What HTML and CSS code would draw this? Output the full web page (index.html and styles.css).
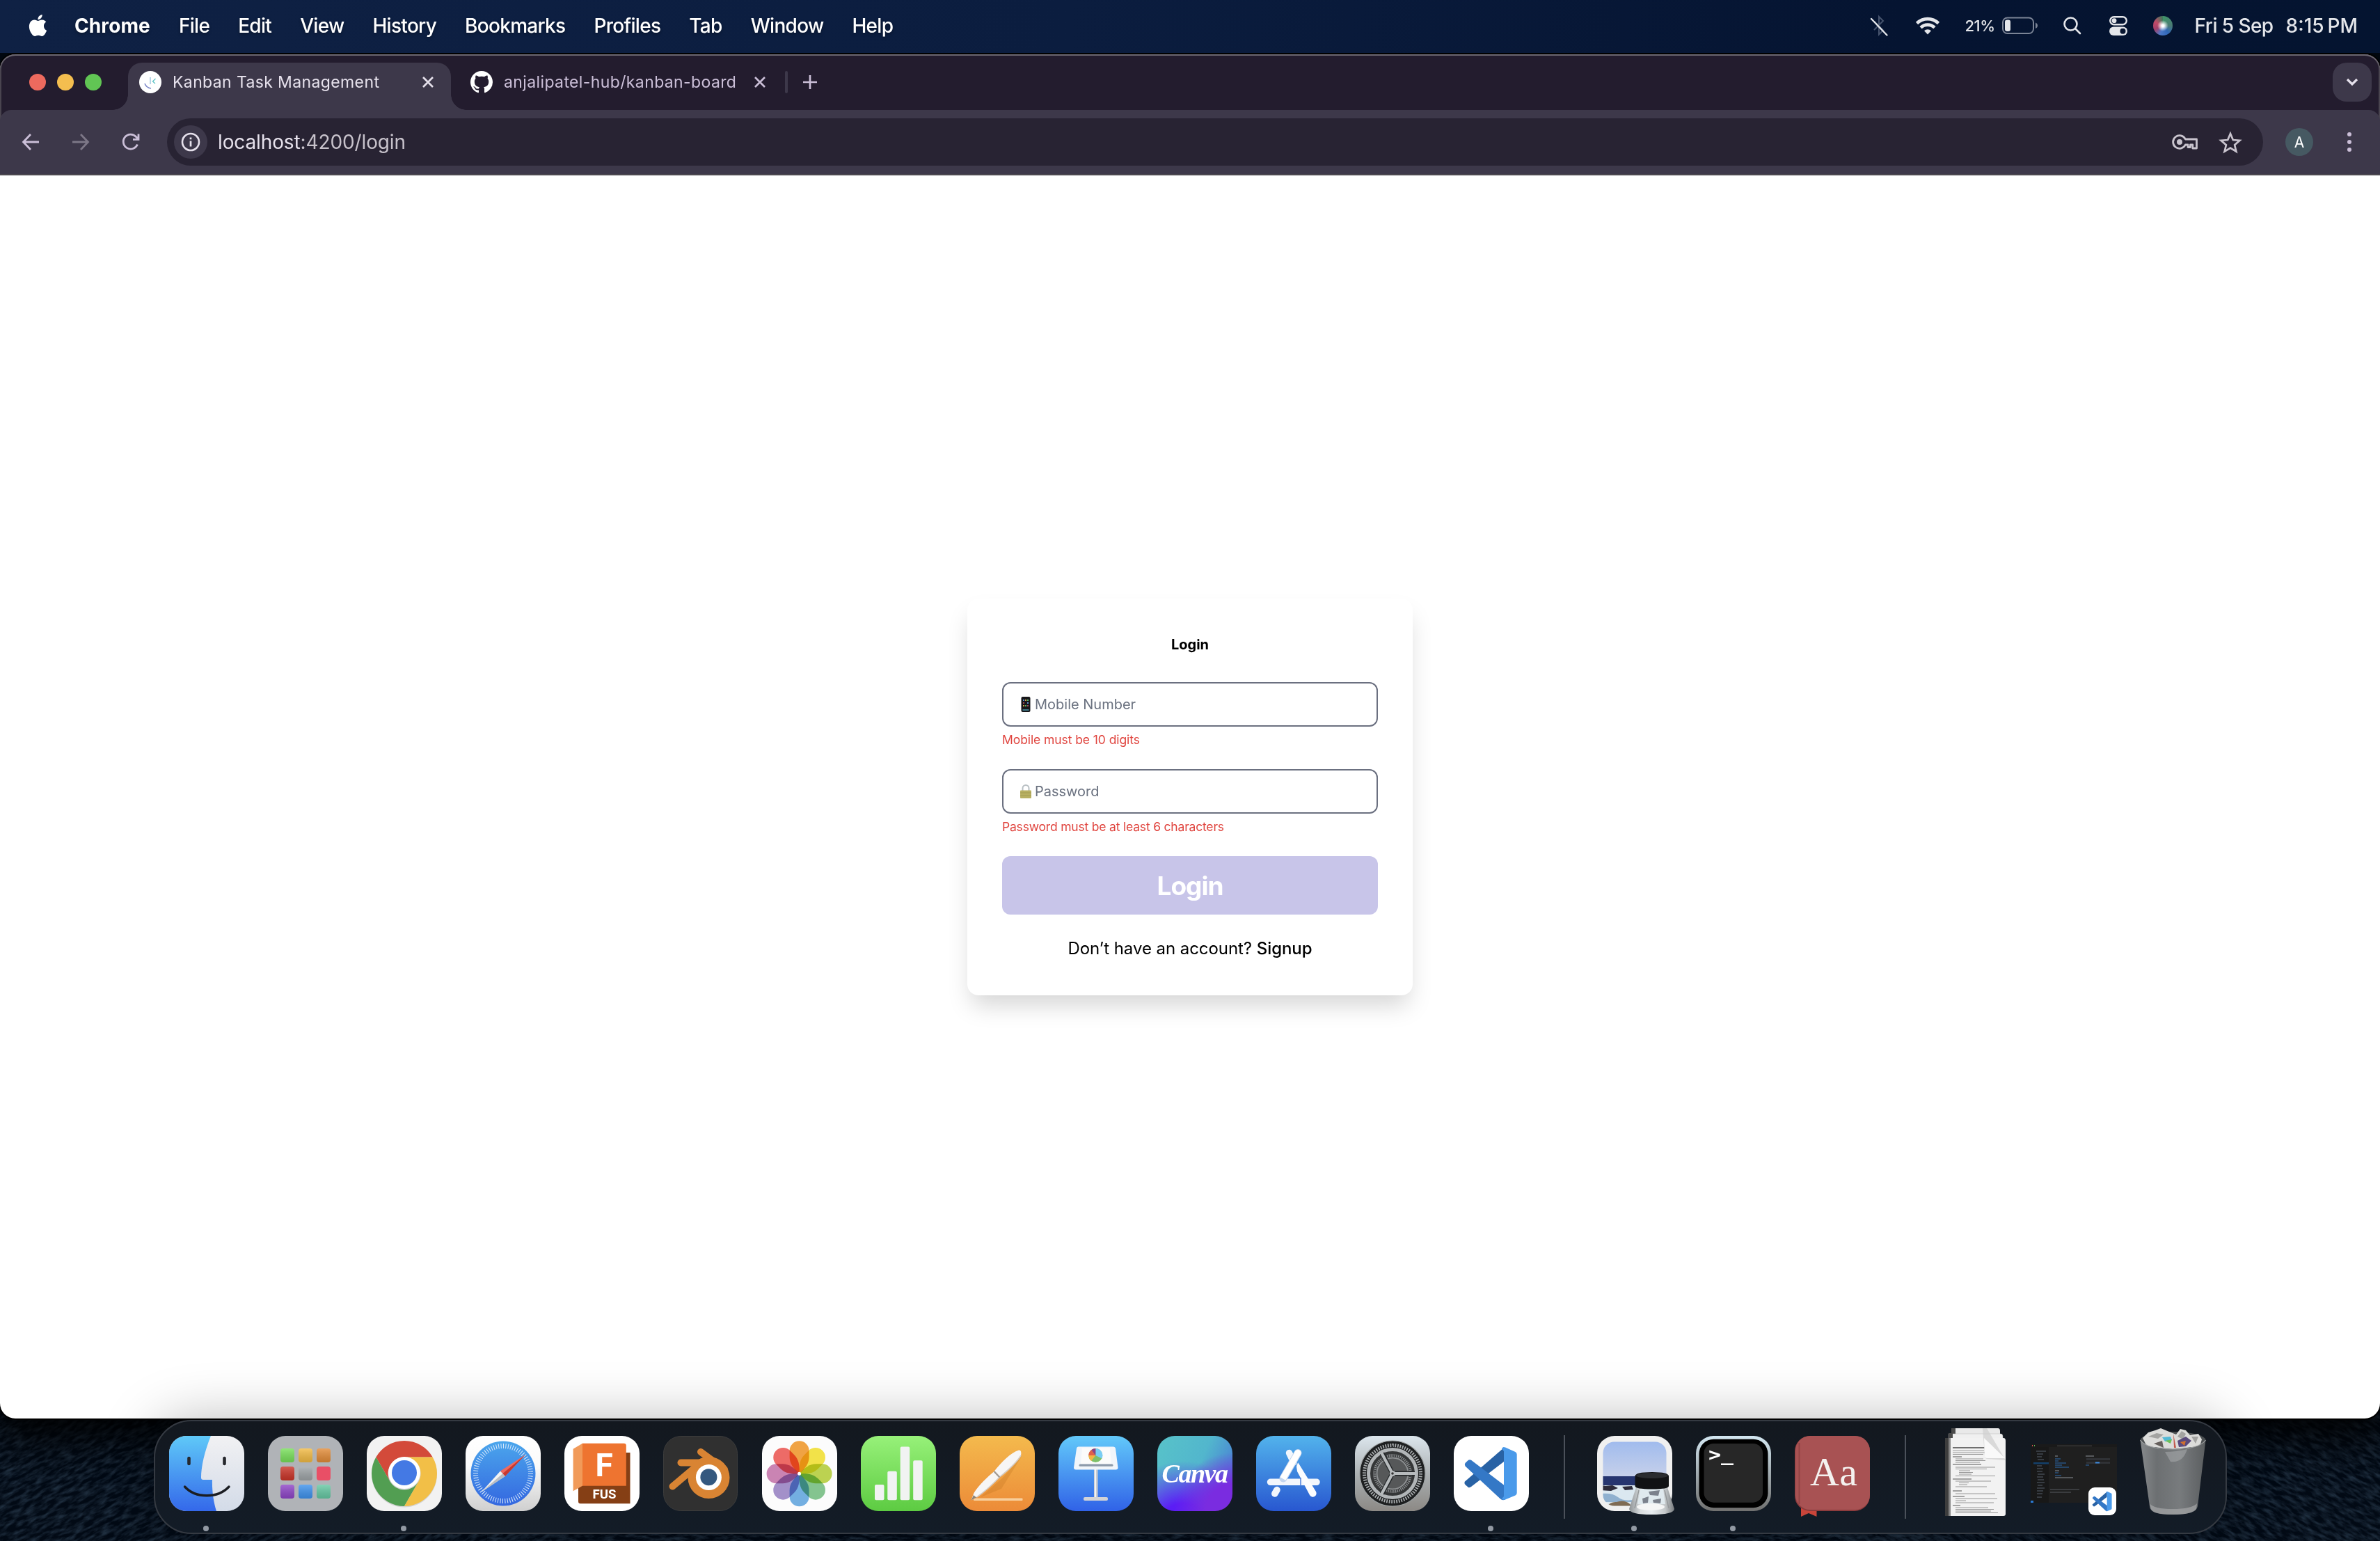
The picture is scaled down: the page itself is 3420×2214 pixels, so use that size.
FILE: index.html
```html
<!DOCTYPE html>
<html lang="en">
<head>
<meta charset="utf-8">
<title>Kanban Task Management</title>
<link rel="stylesheet" href="styles.css">
</head>
<body>
<svg class="wallpaper" aria-hidden="true">
  <defs>
    <filter id="grain" x="0" y="0" width="100%" height="100%">
      <feTurbulence type="fractalNoise" baseFrequency="0.06 0.2" numOctaves="4" seed="7"/>
      <feColorMatrix values="0 0 0 0 0.12  0 0 0 0 0.22  0 0 0 0 0.34  2.2 0 0 0 -0.8"/>
    </filter>
  </defs>
  <g transform="rotate(-28 200 200)"><rect x="-200" y="-100" width="900" height="700" filter="url(#grain)"/></g>
  <g transform="rotate(28 3220 100)"><rect x="2700" y="-300" width="1000" height="800" filter="url(#grain)"/></g>
  <rect x="700" y="226" width="2100" height="24" filter="url(#grain)"/>
</svg>

<header class="menubar">
  <svg class="apple" viewBox="0 0 24 24" fill="#fff"><path d="M12.152 6.896c-.948 0-2.415-1.078-3.96-1.04-2.04.027-3.91 1.183-4.961 3.014-2.117 3.675-.546 9.103 1.519 12.09 1.013 1.454 2.208 3.09 3.792 3.039 1.52-.065 2.09-.987 3.935-.987 1.831 0 2.35.987 3.96.948 1.637-.026 2.676-1.48 3.676-2.948 1.156-1.688 1.636-3.325 1.662-3.415-.039-.013-3.182-1.221-3.22-4.857-.026-3.04 2.48-4.494 2.597-4.559-1.429-2.09-3.623-2.324-4.39-2.376-2-.156-3.675 1.09-4.61 1.09zM15.53 3.83c.843-1.012 1.4-2.427 1.245-3.83-1.207.052-2.662.805-3.532 1.818-.78.896-1.454 2.338-1.273 3.714 1.338.104 2.715-.688 3.559-1.701"/></svg>
  <nav class="menus">
    <b>Chrome</b><span>File</span><span>Edit</span><span>View</span><span>History</span><span>Bookmarks</span><span>Profiles</span><span>Tab</span><span>Window</span><span>Help</span>
  </nav>
  <div class="status">
    <svg class="bt" viewBox="0 0 28 32"><path d="M7 9.500L20 22.500L14 28.500V3L20 9L7 22" fill="none" stroke="#46536d" stroke-width="2"/><path d="M3 6L25.500 29.500" stroke="#e4e6ea" stroke-width="2.400" stroke-linecap="round"/></svg>
    <svg class="wifi" viewBox="0 0 34 26" fill="none" stroke="#e4e6ea" stroke-width="4.600"><path d="M1.500 9.500a22 22 0 0 1 31 0"/><path d="M7 15.700a14.200 14.200 0 0 1 20 0"/><path d="M17 25.500l-5-5.200a7.200 7.200 0 0 1 10 0z" fill="#e4e6ea" stroke="none"/></svg>
    <span class="pct">21%</span>
    <svg class="battery" viewBox="0 0 51 26"><rect x="1" y="1.500" width="44" height="22.500" rx="6.500" fill="none" stroke="#7b8496" stroke-width="2"/><rect x="4" y="4.500" width="8" height="16.500" rx="3" fill="#e4e6ea"/><path d="M48 8.500c4 1.500 4 7 0 8.500z" fill="#7b8496"/></svg>
    <svg class="search" viewBox="0 0 26 26" fill="none" stroke="#e4e6ea" stroke-width="2.600" stroke-linecap="round"><circle cx="10.500" cy="10.500" r="9"/><path d="M17.500 17.500L24 24"/></svg>
    <svg class="cc" viewBox="0 0 26 28"><rect x="1.200" y="1.200" width="23.600" height="11" rx="5.500" fill="none" stroke="#e4e6ea" stroke-width="2.400"/><circle cx="7" cy="6.700" r="3.400" fill="#e4e6ea"/><rect y="15.500" width="26" height="12.500" rx="6.200" fill="#e4e6ea"/><circle cx="19.500" cy="21.700" r="4" fill="#07152f"/></svg>
    <span class="siri"></span>
    <span class="date">Fri 5 Sep</span>
    <span class="time">8:15&#8201;PM</span>
  </div>
</header>

<main class="window">
  <div class="chrome">
    <div class="tabstrip">
      <div class="lights"><i class="red"></i><i class="amber"></i><i class="green"></i></div>
      <div class="tab active">
        <svg class="favicon" viewBox="0 0 32 32"><circle cx="16" cy="16" r="16" fill="#fff"/><path d="M8 18c1.500 4 4.500 6.500 9 7" fill="none" stroke="#7b86c9" stroke-width="1.600"/><path d="M16 9v10" stroke="#b9d5e6" stroke-width="2"/><path d="M23.500 11l-4 4 3.500 3" fill="none" stroke="#5cc3c5" stroke-width="1.300"/></svg>
        <span class="tab-title">Kanban Task Management</span>
        <svg class="close" viewBox="0 0 16 16"><path d="M1 1L15 15M15 1L1 15"/></svg>
      </div>
      <div class="tab">
        <svg class="favicon" viewBox="0 0 16 16" fill="#fff"><path d="M8 0C3.580 0 0 3.580 0 8c0 3.540 2.290 6.530 5.470 7.590.4.070.55-.17.55-.38 0-.19-.01-.82-.01-1.490-2.010.37-2.530-.49-2.690-.94-.09-.23-.48-.94-.82-1.130-.28-.15-.68-.52-.01-.53.63-.01 1.080.58 1.230.82.72 1.210 1.870.87 2.330.66.07-.52.28-.87.51-1.070-1.780-.2-3.640-.89-3.640-3.950 0-.87.31-1.590.82-2.150-.08-.2-.36-1.020.08-2.120 0 0 .67-.21 2.200.82.64-.18 1.320-.27 2-.27s1.360.09 2 .27c1.530-1.040 2.200-.82 2.200-.82.44 1.100.16 1.920.08 2.120.51.56.82 1.270.82 2.150 0 3.070-1.870 3.750-3.650 3.950.29.25.54.73.54 1.480 0 1.070-.01 1.930-.01 2.200 0 .21.15.46.55.38A8.010 8.010 0 0 0 16 8c0-4.420-3.580-8-8-8Z"/></svg>
        <span class="tab-title">anjalipatel-hub/kanban-board</span>
        <svg class="close" viewBox="0 0 16 16"><path d="M1 1L15 15M15 1L1 15"/></svg>
      </div>
      <span class="tab-sep"></span>
      <svg class="plus" viewBox="0 0 20 20"><path d="M10 0V20M0 10H20"/></svg>
      <div class="tab-search"><svg viewBox="0 0 18 12"><path d="M2 2L9 9L16 2"/></svg></div>
    </div>
    <div class="toolbar">
      <svg class="tool back" viewBox="0 0 26 26"><path d="M25 13H3M13 2L2.500 13L13 24"/></svg>
      <svg class="tool forward" viewBox="0 0 26 26"><path d="M1 13H23M13 2L23.500 13L13 24"/></svg>
      <svg class="tool reload" viewBox="0 0 26 26"><path d="M22.500 16.500A10.500 10.500 0 1 1 20.500 5.500L24 9M24 1.500V9.300H16"/></svg>
      <div class="omnibox">
        <span class="info"><svg viewBox="0 0 28 28"><circle cx="14" cy="14" r="12" fill="none" stroke="#e6e1ec" stroke-width="2.600"/><path d="M14 12.500V20.500M14 7.500V10.200" stroke="#e6e1ec" stroke-width="2.700"/></svg></span>
        <span class="url"><em>localhost</em>:4200/login</span>
        <svg class="key" viewBox="0 0 36 22" fill="none" stroke="#c9c4ce" stroke-width="2.800"><path d="M18.300 7H34.500V20H28.800V15H25.500V18.500H22V15H18.300A9.300 9.300 0 1 1 18.300 7z" stroke-linejoin="round"/><circle cx="10" cy="11" r="4" fill="#c9c4ce" stroke="none"/></svg>
        <svg class="star" viewBox="0 0 32 31"><path d="M16 3L19.800 12L29.500 12.800L22.100 19.200L24.400 28.600L16 23.600L7.600 28.600L9.900 19.200L2.500 12.800L12.200 12Z" fill="none" stroke="#c9c4ce" stroke-width="2.700"/></svg>
      </div>
      <span class="avatar">A</span>
      <span class="kebab"><i></i><i></i><i></i></span>
    </div>
  </div>
  <section class="page">
    <form class="card">
      <h1>Login</h1>
      <div class="field">
        <div class="input"><svg class="emoji" viewBox="0 0 16 24"><rect x="1.500" y="1" width="13" height="22" rx="2" fill="#17171a"/><g fill="#5d8fd0"><path d="M4 5h2v2H4zM10 9h2v2h-2z"/><path d="M7 5h2v2H7zM4 13h2v2H4z" fill="#d2a04a"/><path d="M10 5h2v2h-2zM7 13h2v2H7z" fill="#55b46a"/><path d="M4 9h2v2H4zM10 13h2v2h-2z" fill="#a04a5a"/><path d="M3.500 19h9v2h-9z" fill="#3e7a8a"/></g></svg><span>Mobile Number</span></div>
        <p class="error">Mobile must be 10 digits</p>
      </div>
      <div class="field">
        <div class="input"><svg class="emoji" viewBox="0 0 16 24"><path d="M3.500 13V7.500a4.500 4.500 0 0 1 9 0V13" fill="none" stroke="#b9c0c4" stroke-width="2"/><rect y="10.500" width="16" height="11.500" rx="1" fill="#b8b062"/><path d="M0 14h16M0 18h16" stroke="#a39c52" stroke-width="1"/></svg><span>Password</span></div>
        <p class="error long">Password must be at least 6 characters</p>
      </div>
      <div class="submit">Login</div>
      <p class="signup">Don’t have an account? <strong>Signup</strong></p>
    </form>
  </section>
</main>

<footer class="dock-area">
  <div class="dock">
    <div class="app running">
      <svg viewBox="0 0 108 108"><defs><linearGradient id="fb" x2="0" y2="1"><stop stop-color="#5fc9f8"/><stop offset="1" stop-color="#3468ea"/></linearGradient><linearGradient id="fw" x2="0" y2="1"><stop stop-color="#f1f1f3"/><stop offset="1" stop-color="#d3dbe8"/></linearGradient><clipPath id="sq"><rect width="108" height="108" rx="25"/></clipPath></defs>
        <g clip-path="url(#sq)"><rect width="108" height="108" fill="url(#fw)"/><path d="M0 0H60C51 22 46 44 46 60Q46 63 49 63H62C61.500 80 64 96 68 108H0Z" fill="url(#fb)"/></g>
        <path d="M28.500 32V40M79.500 32V40" stroke="#26282d" stroke-width="4.600" stroke-linecap="round"/><path d="M22.500 73C38 90 70 90 86 73" fill="none" stroke="#1b1d22" stroke-width="3.400" stroke-linecap="round"/></svg>
    </div>
    <div class="app">
      <svg viewBox="0 0 108 108"><defs><linearGradient id="lp-shade" x2="0" y2="1"><stop stop-color="#fff" stop-opacity=".2"/><stop offset="1" stop-color="#000" stop-opacity=".14"/></linearGradient></defs><rect width="108" height="108" rx="25" fill="#b0b3b7"/><g><rect x="18" y="18" width="20" height="20" rx="4" fill="#78e05a"/><rect x="44" y="18" width="20" height="20" rx="4" fill="#f3bb44"/><rect x="70" y="18" width="20" height="20" rx="4" fill="#e38c38"/><rect x="18" y="44" width="20" height="20" rx="4" fill="#cb3428"/><rect x="44" y="44" width="20" height="20" rx="4" fill="#9fa5a8"/><rect x="70" y="44" width="20" height="20" rx="4" fill="#e94f66"/><rect x="18" y="70" width="20" height="20" rx="4" fill="#8f45c8"/><rect x="44" y="70" width="20" height="20" rx="4" fill="#3f93ee"/><rect x="70" y="70" width="20" height="20" rx="4" fill="#66c9a4"/></g><g fill="url(#lp-shade)"><rect x="18" y="18" width="20" height="20" rx="4"/><rect x="44" y="18" width="20" height="20" rx="4"/><rect x="70" y="18" width="20" height="20" rx="4"/><rect x="18" y="44" width="20" height="20" rx="4"/><rect x="44" y="44" width="20" height="20" rx="4"/><rect x="18" y="70" width="20" height="20" rx="4"/><rect x="44" y="70" width="20" height="20" rx="4"/><rect x="70" y="70" width="20" height="20" rx="4"/></g></svg>
    </div>
    <div class="app running">
      <svg viewBox="0 0 108 108"><rect width="108" height="108" rx="25" fill="#f2f2f2"/><circle cx="54" cy="55.500" r="47" fill="#000" opacity=".12"/><path d="M13.300 30.500A47 47 0 0 1 94.700 30.500H54A23.500 23.500 0 0 0 33.650 65.750Z" fill="#d34a3a"/><path d="M13.300 30.500L33.650 65.750A23.500 23.500 0 0 0 74.350 65.750L54 101A47 47 0 0 1 13.300 30.500Z" fill="#529e52"/><path d="M94.700 30.500A47 47 0 0 1 54 101L74.350 65.750A23.500 23.500 0 0 0 54 30.500Z" fill="#f2bf47"/><circle cx="54" cy="53" r="23" fill="#fff"/><circle cx="54" cy="53" r="18" fill="#4479e4"/></svg>
    </div>
    <div class="app">
      <svg viewBox="0 0 108 108"><defs><linearGradient id="sf" x2="0" y2="1"><stop stop-color="#4ba6ec"/><stop offset="1" stop-color="#3467e0"/></linearGradient><linearGradient id="sg" x2="0" y2="1"><stop stop-color="#fff"/><stop offset=".4" stop-color="#fafafa"/><stop offset="1" stop-color="#cfcfcf"/></linearGradient></defs><rect width="108" height="108" rx="25" fill="url(#sg)"/><circle cx="54" cy="54" r="46.500" fill="url(#sf)"/><circle cx="54" cy="54" r="39.500" fill="none" stroke="#d6e8fb" stroke-width="7" pathLength="144" stroke-dasharray=".6 1.400"/><path d="M22.600 80.700L50 50.500L57 57.800Z" fill="#f3f3f3"/><path d="M22.600 80.700L53.500 54L57 57.800Z" fill="#b9bcc2"/><path d="M86 27L50 50.500L57 57.800Z" fill="#ee6a60"/><path d="M86 27L53.500 54L57 57.800Z" fill="#c9392f"/></svg>
    </div>
    <div class="app">
      <svg viewBox="0 0 108 108"><rect width="108" height="108" rx="25" fill="#fff"/><path d="M20 70H88V24H94.500V97.300H23Q20 97.300 20 94Z" fill="#853f15"/><path d="M12.600 18.700L26 10.700V71.700L12.600 79.300Z" fill="#f19a59"/><path d="M26 10.700H85.500Q88.800 10.700 88.800 14V71.700H26Z" fill="#ee7430"/><text x="44.500" y="58" class="f-letter">F</text><text x="40.500" y="90" class="fus" textLength="34" lengthAdjust="spacingAndGlyphs">FUS</text></svg>
    </div>
    <div class="app">
      <svg viewBox="0 0 108 108"><rect x=".5" y=".5" width="106" height="107" rx="25" fill="#303030" stroke="#3c3c3c"/><g stroke="#d98433" stroke-width="10" stroke-linecap="round" fill="#d98433"><path d="M54 23L88 48"/><path d="M25.500 38.500H68"/><path d="M13.500 72.500L52 40"/></g><path d="M60 34L88 48L48 50L44 46Z" fill="#d98433"/><circle cx="65.500" cy="60" r="30" fill="#d98433"/><circle cx="65.400" cy="59.600" r="18.500" fill="#fff"/><circle cx="65.400" cy="59.200" r="12" fill="#34587f"/></svg>
    </div>
    <div class="app">
      <svg viewBox="0 0 108 108"><defs><path id="petal" d="M0 0C-9 -8 -14 -15 -14 -24V-33A14 14 0 0 1 14 -33V-24C14 -15 9 -8 0 0Z"/></defs><rect width="108" height="108" rx="25" fill="#fcfcfc"/><g transform="translate(53.600 54.300)" class="petals"><use href="#petal" fill="#f3a545"/><use href="#petal" fill="#f5e54a" transform="rotate(45)"/><use href="#petal" fill="#bed552" transform="rotate(90)"/><use href="#petal" fill="#86c791" transform="rotate(135)"/><use href="#petal" fill="#74b1e4" transform="rotate(180)"/><use href="#petal" fill="#a592cc" transform="rotate(225)"/><use href="#petal" fill="#cd86b5" transform="rotate(270)"/><use href="#petal" fill="#f06c68" transform="rotate(315)"/><circle r="2.500" fill="#fff"/></g></svg>
    </div>
    <div class="app">
      <svg viewBox="0 0 108 108"><defs><linearGradient id="ng" x2="0" y2="1"><stop stop-color="#97f179"/><stop offset="1" stop-color="#5dcb42"/></linearGradient></defs><rect width="108" height="108" rx="25" fill="url(#ng)"/><g fill="#f1f3f2"><rect x="20" y="70" width="13.500" height="22.300" rx="2"/><rect x="38.300" y="50.700" width="13.500" height="41.600" rx="2"/><rect x="56.700" y="15.500" width="13.500" height="76.800" rx="2"/><rect x="75.200" y="35.300" width="13.500" height="57" rx="2"/></g></svg>
    </div>
    <div class="app">
      <svg viewBox="0 0 108 108"><defs><linearGradient id="pg" x2="0" y2="1"><stop stop-color="#f4ba4d"/><stop offset="1" stop-color="#ec8b38"/></linearGradient></defs><rect width="108" height="108" rx="25" fill="url(#pg)"/><rect x="20" y="89.500" width="70.500" height="3.500" rx="1" fill="#f8cf9c"/><path d="M30 88L62 60L90 28L60 76Z" fill="#a85d10" opacity=".2"/><path d="M16.500 92.500L20.500 82C28 70 40 59 49.500 51C60 38 73 24 85 20.500Q89.500 20 88 28C82 38 70 49 57.500 59C48 69 36 80 24.500 88Z" fill="#f7f6f5"/><path d="M24.500 88C36 80 48 69 57.500 59C70 49 82 38 88 28" fill="none" stroke="#d5cdc5" stroke-width="1.600"/><path d="M49.500 51L57.500 59.500" stroke="#a39c94" stroke-width="2.500"/><path d="M16.500 92.500L20 85L24 88.500Z" fill="#8f8375"/></svg>
    </div>
    <div class="app">
      <svg viewBox="0 0 108 108"><defs><linearGradient id="kg" x2="0" y2="1"><stop stop-color="#62c9fa"/><stop offset="1" stop-color="#3062e7"/></linearGradient></defs><rect width="108" height="108" rx="25" fill="url(#kg)"/><rect x="51" y="48" width="5.500" height="42" fill="#c9ccd2"/><rect x="52" y="48" width="2" height="42" fill="#f2f3f5"/><rect x="36" y="88" width="35" height="5" rx="2" fill="#d3d3d6"/><path d="M28.500 15.500H79Q81.500 15.500 82 18L85.500 45.500Q85.500 48.500 82.500 48.500H25Q22 48.500 22 45.500L26 18Q26.300 15.500 28.500 15.500Z" fill="#f1f5fa"/><path d="M34 17.500H74L76 40H32Z" fill="#fbfbfb"/><rect x="29.500" y="40.500" width="49" height="3.200" rx="1.500" fill="#8d9aaa"/><g transform="translate(53.300 28)"><circle r="10" fill="#7ec06a"/><path d="M0 0V-10A10 10 0 0 1 9 4.500Z" fill="#79cdf5"/><path d="M0 0L-6 8A10 10 0 0 1 -10 0Z" fill="#f3b544"/><path d="M0 0H-10A10 10 0 0 1 -6 -8Z" fill="#e0604c"/><path d="M0 0L-6 -8A10 10 0 0 1 0 -10Z" fill="#8f3f86"/></g></svg>
    </div>
    <div class="app canva"><span>Canva</span></div>
    <div class="app">
      <svg viewBox="0 0 108 108"><defs><linearGradient id="ag" x2="0" y2="1"><stop stop-color="#52b3ec"/><stop offset="1" stop-color="#2857d0"/></linearGradient></defs><rect width="108" height="108" rx="25" fill="url(#ag)"/><g stroke="#f2f6fc" stroke-width="9.500" stroke-linecap="round"><path d="M47.500 24.500L54 38M20.500 66.300H87"/><path d="M30 77.500L26.800 83"/></g><path d="M60 24.500L39 61" stroke="#c3d6ef" stroke-width="11" stroke-linecap="round"/><path d="M60 24.500L38.500 61.500" stroke="#fff" stroke-width="9"/><circle cx="60" cy="24.500" r="4.600" fill="#fff"/><path d="M58 44Q58 41 60.500 38.500L86 80A5 5 0 0 1 77 85L59 51Z" fill="#fbfcfe"/><path d="M58 44Q58 41 60.500 38.500" fill="none" stroke="#9ec0ea"/><path d="M64 72V60" stroke="#4a7edb" stroke-width="1.500"/></svg>
    </div>
    <div class="app">
      <svg viewBox="0 0 108 108"><defs><linearGradient id="gg" x2="0" y2="1"><stop stop-color="#dce6ed"/><stop offset=".6" stop-color="#a4a8a9"/><stop offset="1" stop-color="#8c8985"/></linearGradient></defs><rect width="108" height="108" rx="25" fill="url(#gg)"/><circle cx="54" cy="54" r="47" fill="#1d1f20" stroke="#9da1a2" stroke-width="1.200"/><circle cx="54" cy="54" r="40.500" fill="none" stroke="#a8acae" stroke-width="5" pathLength="144" stroke-dasharray="1 1"/><circle cx="54" cy="54" r="34.500" fill="#343637" stroke="#b1b5b7" stroke-width="5"/><circle cx="54" cy="54" r="26" fill="none" stroke="#8b8e90" stroke-width="4" pathLength="120" stroke-dasharray="1 1"/><circle cx="54" cy="54" r="22.500" fill="#565859" stroke="#8d9092" stroke-width="2"/><path d="M54 54H86M54 54L39 25M54 54L39 83" stroke="#25282a" stroke-width="7"/><path d="M54 54H88M54 54L38 24M54 54L38 84" stroke="#b7bbbd" stroke-width="4.200"/><circle cx="54" cy="54" r="4" fill="#b7bbbd"/><circle cx="54" cy="54" r="1.800" fill="#333"/></svg>
    </div>
    <div class="app running">
      <svg viewBox="0 0 108 108"><defs><symbol id="vsc" viewBox="0 0 108 108"><path d="M72 17L15.500 66Q15 69 17 70.500L21 74Q23 74.500 25 73L72 37Z" fill="#2862a5"/><path d="M25 34.800Q23 33.500 21 34.800L16.500 39Q15 41 16.500 43.500L67 90.500Q70 93.500 74 91.500L76 70L72 70.500Z" fill="#3478c6"/><path d="M71.500 16Q69.500 16.500 69 18.500L72 22V87L69 90Q71 93 74 91.500L88.500 85.500Q90.700 84.500 90.700 82V26.500Q90.700 24 88.500 23L74 16.500Q73 16 71.500 16Z" fill="#4a9aea"/></symbol></defs><rect width="108" height="108" rx="25" fill="#fff"/><use href="#vsc" width="108" height="108"/></svg>
    </div>
    <span class="dock-sep"></span>
    <div class="app running">
      <svg viewBox="0 0 108 108"><defs><clipPath id="pc"><rect x="8.500" y="8.500" width="91" height="92" rx="16"/></clipPath><linearGradient id="sky" x2="0" y2="1"><stop stop-color="#9ab8ee"/><stop offset="1" stop-color="#c6d0ea"/></linearGradient><linearGradient id="glass" x2="1" y2="0"><stop stop-color="#8d9295"/><stop offset=".25" stop-color="#d9dddf"/><stop offset=".5" stop-color="#e8edf0"/><stop offset=".8" stop-color="#c3c7c9"/><stop offset="1" stop-color="#777b7e"/></linearGradient></defs><rect width="108" height="108" rx="25" fill="#f0f0f0"/><g clip-path="url(#pc)"><rect width="108" height="58" fill="url(#sky)"/><rect y="58" width="108" height="50" fill="#dbe8f0"/><rect y="58" width="108" height="13" fill="#26356f"/><path d="M0 70L12 72L22 71L30 75L20 79L6 78ZM36 73L50 72L52 77L40 78Z" fill="#2d2b3a"/><path d="M0 84Q20 80 30 88T60 90V95H0Z" fill="#8fb0cf"/><path d="M14 101Q20 94 28 95Q38 91 46 97L50 101Z" fill="#7f6b53"/></g><path d="M56 74H101L111 105Q110 113 78 113Q47 113 46 105Z" fill="url(#glass)"/><path d="M62 76H95L98 98H58Z" fill="#dfe9ee"/><path d="M74 80L90 78L88 86L76 85ZM65 90L74 87L73 96L66 97ZM80 92L92 90L91 97L81 96Z" fill="#7b818c"/><ellipse cx="77" cy="102" rx="20" ry="5" fill="#f5f6f6"/><path d="M60 78L54 104M97 78L103 104" stroke="#94989a" stroke-width="1.500"/><path d="M54.500 58Q54.500 52 79 52Q103 52 103 58V72Q103 76.500 79 76.500Q54.500 76.500 54.500 72Z" fill="#111214"/><ellipse cx="79" cy="57" rx="23" ry="4" fill="#2b2d30"/></svg>
    </div>
    <div class="app running">
      <svg viewBox="0 0 108 108"><defs><linearGradient id="tg" x2="0" y2="1"><stop stop-color="#d3e7f1"/><stop offset="1" stop-color="#70706f"/></linearGradient></defs><rect width="108" height="108" rx="25" fill="url(#tg)"/><rect x="4.500" y="4.700" width="99" height="98.500" rx="21" fill="#000"/><rect x="11.500" y="11" width="84.500" height="84.700" rx="14" fill="#272727"/><text x="18" y="36" class="prompt" textLength="36" lengthAdjust="spacingAndGlyphs">&gt;_</text></svg>
    </div>
    <div class="app">
      <svg viewBox="0 0 108 108"><path d="M9 98H31.500V116L20 111L9 116Z" fill="#c9453a"/><rect width="108" height="108" rx="22" fill="#8d3c3d"/><rect x="1" width="107" height="106" rx="21" fill="#a85253"/><path d="M6.500 10V98" stroke="#934445" stroke-width="2"/><text x="22" y="71" class="aa" textLength="68">Aa</text></svg>
    </div>
    <span class="dock-sep"></span>
    <svg class="docs" viewBox="0 0 88 127">
      <path d="M9 4Q9 0 14 0H76Q79 0 79 4V60H9Z" fill="#e9e9e9"/><path d="M9 0h6v10H9z" fill="#4a4a4a"/><path d="M5 8H80Q83 8 83 12V60H5Z" fill="#f0f0f0" stroke="#bbb" stroke-width=".5"/><path d="M5 7h6v10H5z" fill="#4a4a4a"/>
      <path d="M0 14H84Q87 14 87 18V123Q87 126 84 126H0Z" fill="#f2f2f2"/><path d="M0 14H8V126H0Z" fill="#3d3d3d"/><path d="M5 14H8V126H5Z" fill="#858585"/>
      <path d="M11 28H58" stroke="#444" stroke-width="1.600"/><path d="M11 32.500H56M11 35H57M11 37.500H55M15 44H55M15 46.500H58M15 49H50M15 56H72M15 58.500H60M20 61H36M20 63.500H40M20 66H38M15 68.500H72M15 76H66M20 78.500H34M20 81H32M15 84H60M15 94H72M15 101H75M15 104H30M15 107H70M15 114H62M15 116.500H70M15 119H66M15 121.500H76" stroke="#8d8d8d" stroke-width=".9"/><path d="M11 41H24M11 52H52M11 73H38M11 90H24M11 98H28M11 111H22" stroke="#555" stroke-width="1.200"/>
      <path d="M54 0L60 0L87 46L60 44Q57 43 57 40Z" fill="#cfcfcf" opacity=".7"/><path d="M56 14L86 43H60Q57 43 57 40Z" fill="#f9f9f9"/>
    </svg>
    <svg class="thumb" viewBox="0 0 124 104">
      <rect width="124" height="84" fill="#1f1f1f"/><rect width="26" height="84" fill="#181818"/><rect width="124" height="4" fill="#1a1a1a"/><rect x="38" y="1" width="50" height="2.500" fill="#2c2c2c"/><rect x="4" y="26" width="22" height="2.500" fill="#14406a"/><rect y="81" width="4" height="3" fill="#2a78d0"/><path d="M2 2h1" stroke="#e05a50" stroke-width="2"/><path d="M5 2h1" stroke="#58b85a" stroke-width="2"/>
      <path d="M8 10H22M9 14H18M9 18H16M10 22H19M9 31H16M9 35H18M9 39H17M10 43H20M9 47H18M10 51H19M9 55H20M10 59H17M9 63H20M9 67H18M9 71H17M9 76H16" stroke="#56606c"/><path d="M35 17H39M35 38H41M79 17H91M35 48H61" stroke="#8d9299"/><path d="M35 21H43M35 24H40M35 27H51M35 30H45M35 33H55M35 41H40M35 45H44M79 30H84" stroke="#2d6db0"/><path d="M80 21.500H114M80 26.500H114" stroke="#303236" stroke-width="3"/><path d="M93 26.500h6" stroke="#3d8ae0" stroke-width="2"/><path d="M28 65H70M28 69H58" stroke="#565a60"/>
      <rect x="83" y="62" width="40" height="40" rx="9" fill="#fff"/><use href="#vsc" x="83" y="62" width="40" height="40"/>
    </svg>
    <svg class="trash" viewBox="0 0 96 126">
      <defs><linearGradient id="tr" x2="1" y2="0"><stop stop-color="#8b8e90"/><stop offset=".25" stop-color="#707375"/><stop offset=".6" stop-color="#7c7f81"/><stop offset="1" stop-color="#5e6163"/></linearGradient></defs>
      <ellipse cx="47.500" cy="17" rx="47" ry="12" fill="#4c5052"/><path d="M4 14L12 6L22 3L30 0L42 5L52 9L58 1L66 3L72 10L84 8L89 16L86 26L47 30L10 26Z" fill="#dcdcda"/><path d="M12 12L24 7L34 9L26 15ZM60 4L66 8L62 16L54 12ZM74 12L84 12L80 22Z" fill="#a3a3a1"/><path d="M32 13L44 12L46 17L36 19Z" fill="#53b9d5"/><path d="M36 18L46 16L44 22Z" fill="#6cc05a"/><path d="M54 18L66 12L74 18L66 26L56 27Z" fill="#5a4a7c"/><path d="M58 20L66 18L64 25Z" fill="#d0702f"/><path d="M48 8L52 28L49 28Z" fill="#c25a4d"/><path d="M20 22L32 18L34 28Z" fill="#665f5c"/>
      <path d="M.5 17Q10 30 47.500 30T94.500 17L83 112Q81 124 47.500 124T14 112Z" fill="url(#tr)" opacity=".96"/><path d="M36 34Q52 34 68 30Q62 50 44 48Z" fill="#b3b6b7" opacity=".45"/><path d="M14 108Q20 116 47 116T82 108L81 116Q76 124 47 124T16 116Z" fill="#a5a7a8" opacity=".7"/><path d="M.5 17Q10 30 47.500 30T94.500 17" fill="none" stroke="#a2a5a6" stroke-width="1.200"/>
    </svg>
  </div>
</footer>
</body>
</html>
```
FILE: styles.css
```css
* { box-sizing: border-box; }
html, body { height: 100%; }
body {
  margin: 0;
  display: flex;
  flex-direction: column;
  width: 3420px;
  height: 2214px;
  overflow: hidden;
  position: relative;
  background: #020a15;
  font-family: Inter, "Liberation Sans", sans-serif;
}
svg { display: block; flex: none; overflow: visible; }
p, h1 { margin: 0; }

.wallpaper { position: absolute; left: 0; bottom: 0; width: 3420px; height: 250px; overflow: hidden; opacity: .3; }

.menubar {
  position: relative;
  z-index: 2;
  flex: none;
  height: 76px;
  display: flex;
  align-items: center;
  padding: 0 32px 3px 39px;
  background: linear-gradient(90deg, #0f2144, #0b1d3f 45%, #051431 80%, #041430);
  color: #fff;
  font-size: 28px;
  font-weight: 500;
  white-space: nowrap;
}
.apple { width: 31px; height: 31px; }
.menus { display: flex; gap: 41px; margin-left: 37px; letter-spacing: -.7px; text-shadow: 0 2px 4px rgba(0, 0, 0, .35); }
.menus b { font-weight: 700; letter-spacing: .1px; }
.status { display: flex; align-items: center; margin-left: auto; color: #e4e6ea; }
.bt { width: 28px; height: 32px; }
.wifi { width: 34px; height: 26px; margin-left: 39px; }
.pct { font-size: 22px; margin-left: 37px; letter-spacing: -.5px; }
.battery { width: 51px; height: 26px; margin-left: 10px; }
.search { width: 26px; height: 26px; margin-left: 37px; }
.cc { width: 26px; height: 28px; margin-left: 40px; }
.siri {
  width: 28px; height: 28px; margin-left: 37px; border-radius: 50%;
  background: radial-gradient(circle at 50% 50%, #fff 0 8%, transparent 40%), conic-gradient(#3f9468, #4a7b74 25%, #2f67b8 40%, #4c79c8 55%, #a0406a 68%, #c04a68 82%, #3f7a5c);
}
.date { margin-left: 32px; letter-spacing: -.57px; }
.time { margin-left: 18px; }

.window {
  position: relative;
  flex: none;
  height: 1960px;
  margin-top: 2px;
  display: flex;
  flex-direction: column;
  border-radius: 22px;
  background: #fff;
  box-shadow: 0 0 0 2px #000, 0 16px 60px 10px #000;
}
.chrome {
  background: #231c2e;
  border-radius: 22px 22px 0 0;
  box-shadow: inset 0 2px 0 #6b6771, inset 2px 0 0 #49444f, inset -2px 0 0 #49444f;
}
.tabstrip { height: 80px; display: flex; align-items: center; }
.lights { display: flex; gap: 16px; margin-left: 42px; width: 142px; }
.lights i { width: 24px; height: 24px; border-radius: 50%; }
.red { background: #ed6a5e; }
.amber { background: #f4be4f; }
.green { background: #61c554; }
.tab {
  position: relative;
  height: 68px;
  margin-top: 12px;
  width: 480px;
  display: flex;
  align-items: center;
  padding: 0 28px 12px;
  color: #cbbfd8;
  font-size: 23px;
  letter-spacing: .38px;
  white-space: nowrap;
}
.tab.active { width: 464px; padding: 0 25px 12px 16px; background: #3d384a; border-radius: 20px 20px 0 0; color: #e6e1ec; }
.tab.active::before, .tab.active::after {
  content: ""; position: absolute; bottom: 0; width: 22px; height: 22px;
}
.tab.active::before { right: 100%; background: radial-gradient(circle at 0 0, transparent 21.500px, #3d384a 22px); }
.tab.active::after { left: 100%; background: radial-gradient(circle at 100% 0, transparent 21.500px, #3d384a 22px); }
.favicon { width: 32px; height: 32px; margin-right: 16px; }
.close { width: 16px; height: 16px; margin-left: auto; }
.close path, .plus path { stroke: currentColor; stroke-width: 2.700; fill: none; }
.tab-sep { width: 4px; height: 32px; border-radius: 2px; background: #3d384a; }
.plus { width: 20px; height: 20px; margin-left: 22px; color: #cbbfd8; }
.tab-search { width: 56px; height: 56px; margin: 0 12px 0 auto; border-radius: 20px; background: #3d384a; display: grid; place-items: center; }
.tab-search svg { width: 18px; height: 12px; }
.tab-search path { fill: none; stroke: #e6e1ec; stroke-width: 3.200; }

.toolbar {
  height: 94px;
  display: flex;
  align-items: center;
  background: #3d384a;
  border-bottom: 2px solid #4b474f;
  border-radius: 16px 16px 0 0;
}
.tool { width: 26px; height: 26px; fill: none; stroke: #cbbfd8; stroke-width: 2.800; }
.back { margin-left: 31px; }
.forward { margin-left: 46px; stroke: #7d7787; }
.reload { margin-left: 46px; }
.omnibox { width: 3012px; height: 68px; margin-left: 39px; border-radius: 34px; background: #282333; display: flex; align-items: center; padding: 0 31px 0 10px; }
.info { width: 48px; height: 48px; border-radius: 50%; background: #3d384a; display: grid; place-items: center; }
.info svg { width: 28px; height: 28px; }
.url { margin-left: 15px; font-size: 28px; letter-spacing: -.12px; color: #c7c2cb; white-space: nowrap; }
.url em { font-style: normal; color: #e6e1ec; }
.key { width: 36px; height: 22px; margin-left: auto; }
.star { width: 32px; height: 31px; margin-left: 31px; }
.avatar { width: 40px; height: 40px; margin-left: 32px; border-radius: 50%; background: #465962; color: #fff; font-size: 21px; display: grid; place-items: center; }
.kebab { display: grid; gap: 5px; margin-left: 49px; }
.kebab i { width: 6px; height: 6px; border-radius: 50%; background: #cbbfd8; }

.page { flex: 1; display: grid; place-items: center; }
.card {
  width: 640px;
  height: 570px;
  padding: 50px;
  border-radius: 16px;
  background: #fff;
  box-shadow: 0 20px 34px -6px rgba(0, 0, 0, .17);
}
.card h1 { height: 70px; font-size: 20px; line-height: 32px; text-align: center; font-weight: 700; }
.field { height: 125px; }
.input { height: 64px; border: 2px solid #6b7080; border-radius: 12px; display: flex; align-items: center; padding-left: 24px; font-size: 20px; color: #6b7280; }
.emoji { width: 16px; height: 24px; margin-right: 5px; }
.error { margin-top: 4px; font-size: 17.500px; line-height: 30px; letter-spacing: -.08px; color: #e0443e; }
.error.long { letter-spacing: -.19px; }
.submit { height: 84px; border-radius: 12px; background: #c8c5e9; color: #fff; font-size: 37px; letter-spacing: -1px; font-weight: 700; display: grid; place-items: center; }
.signup { margin-top: 30px; text-align: center; font-size: 24px; line-height: 38px; letter-spacing: -.06px; color: #000; }
.signup strong { font-weight: 500; }

.dock-area { position: relative; flex: 1; display: flex; justify-content: center; align-items: flex-start; }
.dock {
  width: 2979px;
  height: 164px;
  margin-top: 2px;
  display: flex;
  align-items: flex-start;
  gap: 34px;
  padding: 21px 20px 0;
  border: 2px solid #353a42;
  border-radius: 54px;
  background: linear-gradient(#13181f, #131c27);
  box-shadow: 0 0 80px rgba(0, 0, 0, .28);
}
.app { position: relative; flex: none; width: 108px; height: 108px; }
.running::after { content: ""; position: absolute; left: 49px; top: 129px; width: 8px; height: 8px; border-radius: 50%; background: #9299a3; }
.dock-sep { flex: none; width: 2px; height: 120px; margin: -1px 12px 0 16px; background: #4b515a; }
.petals use { mix-blend-mode: multiply; }
.f-letter { font: 700 46px Roboto, "Liberation Sans", sans-serif; fill: #fff; }
.fus { font: 700 18px Roboto, "Liberation Sans", sans-serif; fill: #fff; }
.prompt { font: 700 26px "DejaVu Sans Mono", monospace; fill: #fff; }
.aa { font: 58px "Liberation Serif", serif; fill: #f4f1ef; }
.canva {
  border-radius: 25px;
  background: radial-gradient(circle at 100% 100%, #7a2ce0 0 25%, transparent 55%), radial-gradient(circle at 35% 125%, #5b1df5 0 25%, transparent 65%), linear-gradient(115deg, #58c3c9, #52b6cd 50%, #4667d8);
  display: grid; place-items: center;
}
.canva span { font: italic 700 38px "Liberation Serif", serif; letter-spacing: -1.500px; color: #fff; }
.docs { width: 88px; height: 127px; margin: -11px 0 0 10px; }
.thumb { width: 124px; height: 104px; margin: 12px 0 0 1px; }
.trash { width: 96px; height: 126px; margin: -11px 0 0 -1px; }
```
